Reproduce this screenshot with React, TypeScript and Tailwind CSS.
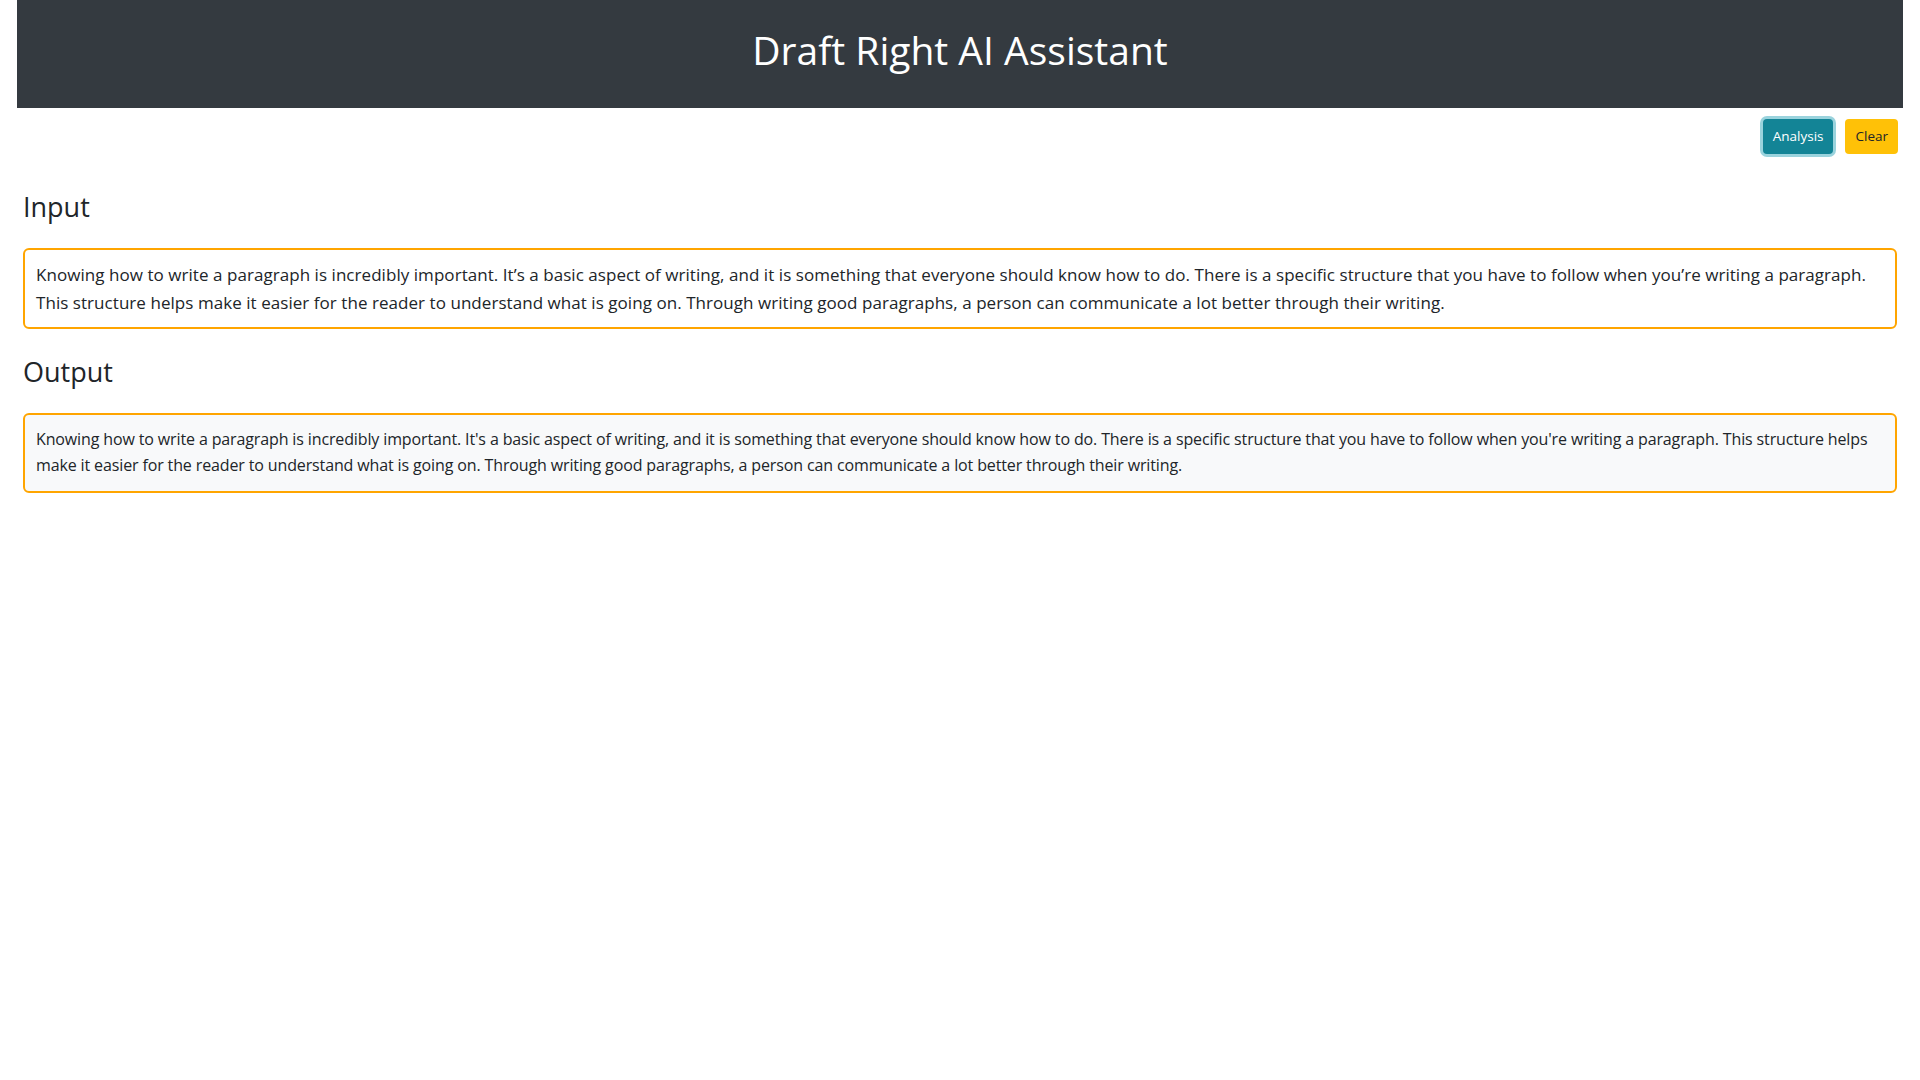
import React from "react";

const inputText =
  "Knowing how to write a paragraph is incredibly important. It\u2019s a basic aspect of writing, and it is something that everyone should know how to do. There is a specific structure that you have to follow when you\u2019re writing a paragraph. This structure helps make it easier for the reader to understand what is going on. Through writing good paragraphs, a person can communicate a lot better through their writing.";

const outputText =
  "Knowing how to write a paragraph is incredibly important. It's a basic aspect of writing, and it is something that everyone should know how to do. There is a specific structure that you have to follow when you're writing a paragraph. This structure helps make it easier for the reader to understand what is going on. Through writing good paragraphs, a person can communicate a lot better through their writing.";

export default function App() {
  return (
    <div className="min-h-screen bg-white text-[#212529] font-['Open_Sans',sans-serif]">
      <header className="mx-[17px] h-[108px] bg-[#343a40] flex justify-center pt-[26px]">
        <h1 className="text-[39px] leading-[47px] text-white font-normal">Draft Right AI Assistant</h1>
      </header>

      <div className="mt-[11px] flex justify-end gap-[12px] pr-[22px]">
        <button className="h-[35px] px-[10px] rounded-[4px] bg-[#138496] text-white text-[13.5px] ring-[3px] ring-[#9ad3dd]">
          Analysis
        </button>
        <button className="h-[35px] px-[10px] rounded-[4px] bg-[#ffc107] text-[#212529] text-[13.5px]">
          Clear
        </button>
      </div>

      <main className="px-[23px]">
        <h3 className="mt-[35px] mb-[24px] text-[27px] leading-[35px] font-normal">Input</h3>
        <div className="border-2 border-[#ffa500] rounded-[6px] pl-[11px] pr-[11px] pt-[11px] pb-[10px] text-[17px] leading-[28px] tracking-[0.05px]">
          {inputText}
        </div>

        <h3 className="mt-[25px] mb-[24px] text-[27px] leading-[35px] font-normal">Output</h3>
        <div className="border-2 border-[#ffa500] rounded-[6px] bg-[#f8f9fa] pl-[11px] pr-[11px] pt-[11px] pb-[13px] text-[16px] leading-[26px] tracking-[-0.13px]">
          {outputText}
        </div>
      </main>
    </div>
  );
}
